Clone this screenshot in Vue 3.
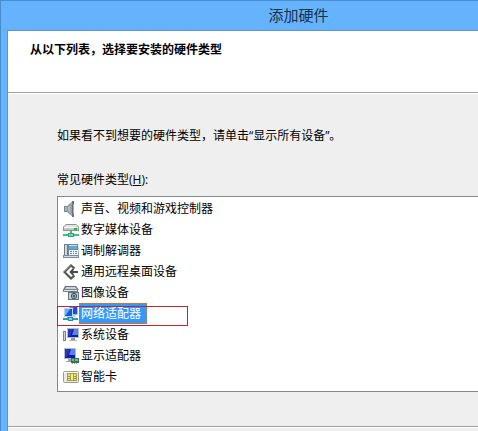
<template>
  <div class="window">
    <header class="title-bar">添加硬件</header>

    <main class="client">
      <div class="banner">
        <h1>从以下列表，选择要安装的硬件类型</h1>
      </div>

      <section class="page">
        <p>如果看不到想要的硬件类型，请单击“显示所有设备”。</p>
        <p id="types-label" class="list-label">常见硬件类型(<u>H</u>):</p>

        <div class="list" role="listbox" aria-labelledby="types-label">
          <button
            v-for="item in hardware"
            :key="item.id"
            type="button"
            role="option"
            class="row"
            :class="{ selected: item.id === selected }"
            :aria-selected="item.id === selected"
            @click="selected = item.id"
          >
            <svg class="icon" viewBox="0 0 16 16" aria-hidden="true">
              <g v-if="item.id === 'sound'">
                <path d="M1 5h4v6H1z" fill="#7b878e" />
                <path d="M2 6h2v4H2z" fill="#aab5bb" />
                <path d="M4 5l6-5v16l-6-5z" fill="#8b969c" />
                <path d="M5 6l4-4v12l-4-4z" fill="#b4bfc5" />
                <path d="M7 4l2-2v12l-2-2z" fill="#97a4ab" />
                <path d="M9 0h2v16H9z" fill="#66727a" />
                <path d="M10 3h1v10h-1z" fill="#a5b0b6" />
              </g>
              <g v-else-if="item.id === 'media'">
                <path d="M3 2h10l3 3v4H0V5z" fill="#8c9396" />
                <path d="M3 3h10l2 2H1z" fill="#e2e5e6" />
                <path d="M1 5h14v3H1z" fill="#c3c8ca" />
                <path d="M1 5h14v1H1z" fill="#f5f7f7" />
                <path d="M11 6h3v2h-3z" fill="#28b838" />
                <path d="M7 9h2v3H7z" fill="#5fae90" />
                <path d="M0 12h16v2H0z" fill="#3fb88a" />
                <path d="M5 11h6v4H5z" fill="#2fa377" />
                <path d="M6 12h4v2H6z" fill="#6fdcae" />
              </g>
              <g v-else-if="item.id === 'modem'">
                <path d="M1 1h4v13H1z" fill="#6e7f8c" />
                <path d="M2 2h2v11H2z" fill="#cad8e2" />
                <path d="M5 1h10l1 13H5z" fill="#718797" />
                <path d="M6 2h8v4H6z" fill="#5baada" />
                <path d="M6 2h8v1H6z" fill="#c0e6f7" />
                <path d="M6 7h9v6H6z" fill="#eef3f6" />
                <path d="M7 8h2v1H7zM10 8h1v1h-1zM12 8h2v1h-2zM7 10h2v1H7zM10 10h1v1h-1zM12 10h2v1h-2z" fill="#6f8694" />
                <path d="M0 12h16v3H0z" fill="#7d8c96" />
                <path d="M1 13h14v1H1z" fill="#d4dce1" />
              </g>
              <g v-else-if="item.id === 'remote'" fill="none">
                <path d="M11.500 4.500L8 1.500L1.500 8L8 14.500L11.500 11.500" stroke="#555" stroke-width="2.200" />
                <path d="M8 1.500L1.500 7.500" stroke="#8e8e8e" />
                <path d="M10.500 5L7.500 8l3 3" stroke="#4b4b4b" stroke-width="1.800" />
                <path d="M8 8h7" stroke="#4b4b4b" stroke-width="2" />
              </g>
              <g v-else-if="item.id === 'image'">
                <path d="M2 1h11l3 4H0z" fill="#687276" />
                <path d="M3 2h9l2 2H2z" fill="#cbd2d5" />
                <path d="M0 4h15v3H0z" fill="#77848a" />
                <path d="M1 5h13v1H1z" fill="#dfe5e8" />
                <path d="M7 6h5v2H7z" fill="#5f6e77" />
                <path d="M5 7h11v8H5z" fill="#65747d" />
                <path d="M6 8h9v6H6z" fill="#c5d0d6" />
                <circle cx="11" cy="11" r="3" fill="#3d4e59" />
                <circle cx="11" cy="11" r="2" fill="#9ec5d9" />
                <circle cx="11" cy="11" r="1" fill="#263c4c" />
              </g>
              <g v-else-if="item.id === 'network'">
                <path d="M6 0h9v9H6z" fill="#a2c3e0" />
                <path d="M7 1h7v7H7z" fill="#1c50cf" />
                <path d="M7 1h4L8 7H7z" fill="#4b92ed" />
                <path d="M10 9h3v2h-3z" fill="#bcd3e5" />
                <path d="M1 2h9v9H1z" fill="#b9d3e8" />
                <path d="M2 3h7v7H2z" fill="#1b55d8" />
                <path d="M2 3h5L3 9H2z" fill="#63b3fa" />
                <path d="M4 11h4v1H4z" fill="#8ba9c1" />
                <path d="M0 12h15v2H0z" fill="#319ca9" />
                <path d="M5 11h5v4H5z" fill="#2787a0" />
                <path d="M6 12h3v2H6z" fill="#80d5df" />
              </g>
              <g v-else-if="item.id === 'system'">
                <path d="M0 4h3v10H0z" fill="#78838b" />
                <path d="M1 5h1v8H1z" fill="#cbd4d9" />
                <path d="M0 7h1v3H0z" fill="#27b72c" />
                <path d="M4 1h12v10H4z" fill="#b3bdc6" />
                <path d="M5 2h10v8H5z" fill="#151ca4" />
                <path d="M5 2h5L7 9H5z" fill="#2438bd" />
                <path d="M11 2h4v6h-6z" fill="#5c82ea" />
                <path d="M8 11h4v2H8z" fill="#8b959c" />
                <path d="M6 13h8v1H6z" fill="#b0b9be" />
              </g>
              <g v-else-if="item.id === 'display'">
                <path d="M1 0h12v11H1z" fill="#b3bdc6" />
                <path d="M2 1h10v9H2z" fill="#151ca4" />
                <path d="M2 1h5L4 9H2z" fill="#2438bd" />
                <path d="M8 1h4v6H6z" fill="#5c82ea" />
                <path d="M5 11h3v2H5zM3 13h5v1H3z" fill="#9aa4aa" />
                <path d="M8 10h8v5H8z" fill="#2c7860" />
                <path d="M9 11h2v2H9zM12 11h3v2h-3z" fill="#7bb39c" />
                <path d="M9 15h1v1H9zM11 15h1v1h-1zM13 15h1v1h-1z" fill="#a9a768" />
              </g>
              <g v-else>
                <rect x="0.500" y="2.500" width="15" height="11" rx="1" fill="#e9e9e4" stroke="#999996" />
                <path d="M1 3h14v1H1z" fill="#fafaf7" />
                <path d="M4 4h10v8H4z" fill="#a5a23c" />
                <path d="M5 5h2v2H5zM5 8h2v1H5zM5 10h2v1H5zM11 5h2v2h-2zM11 8h2v1h-2zM11 10h2v1h-2z" fill="#e8df75" />
                <path d="M8 5h2v6H8z" fill="#f2ed9b" />
              </g>
            </svg>
            <span class="name">{{ item.name }}</span>
          </button>

          <div class="marker"></div>
        </div>
      </section>

      <footer class="actions"></footer>
    </main>
  </div>
</template>

<script setup>
import { ref } from 'vue'

const selected = ref('network')

const hardware = [
  { id: 'sound', name: '声音、视频和游戏控制器' },
  { id: 'media', name: '数字媒体设备' },
  { id: 'modem', name: '调制解调器' },
  { id: 'remote', name: '通用远程桌面设备' },
  { id: 'image', name: '图像设备' },
  { id: 'network', name: '网络适配器' },
  { id: 'system', name: '系统设备' },
  { id: 'display', name: '显示适配器' },
  { id: 'card', name: '智能卡' }
]
</script>

<style>
body {
  margin: 0;
}
</style>

<style scoped>
.window {
  box-sizing: border-box;
  min-height: 100vh;
  display: flex;
  flex-direction: column;
  padding-left: 6px;
  border-top: 1px solid #4a8dce;
  border-left: 1px solid #4a8dce;
  background: #66b3fd;
  color: #000;
  font-family: "Open Sans", "Noto Sans CJK SC", sans-serif;
  font-size: 12px;
  line-height: 20px;
  overflow: hidden;
}

.title-bar {
  padding-left: 112px;
  line-height: 29px;
  font-size: 15px;
  text-align: center;
  color: #17304a;
}

.client {
  flex: 1;
  display: flex;
  flex-direction: column;
  border-top: 1px solid #5a94cb;
  border-left: 1px solid #5a94cb;
  background: #efefef;
}

.banner {
  height: 61px;
  padding: 0 22px;
  background: #fff;
  border-bottom: 1px solid #a0a0a0;
}

h1 {
  margin: 0;
  padding-top: 9px;
  font-size: 12px;
  font-weight: bold;
}

.page {
  padding: 32px 0 34px 49px;
  border-top: 1px solid #fff;
}

p {
  margin: 0;
}

.list-label {
  margin: 24px 0 6px;
}

/* the right edge of the list runs past the window */
.list {
  position: relative;
  padding: 1px 0 4px;
  border: 1px solid #828790;
  border-right: none;
  background: #fff;
}

.row {
  display: flex;
  align-items: center;
  width: 100%;
  height: 21px;
  padding: 0 0 0 5px;
  border: none;
  background: none;
  color: inherit;
  font: inherit;
  line-height: 21px;
  text-align: left;
}

.icon {
  width: 16px;
  height: 16px;
}

.name {
  padding: 0 6px 0 2px;
}

.selected .name {
  background: #3399ff;
  color: #fff;
  outline: 1px dotted #c87832;
  outline-offset: -1px;
}

.marker {
  position: absolute;
  top: 109px;
  left: -1px;
  width: 129px;
  height: 18px;
  border: 1px solid #b8282e;
  pointer-events: none;
}

.actions {
  flex: 1;
  border-top: 1px solid #a0a0a0;
  box-shadow: inset 0 1px #fff;
}
</style>
